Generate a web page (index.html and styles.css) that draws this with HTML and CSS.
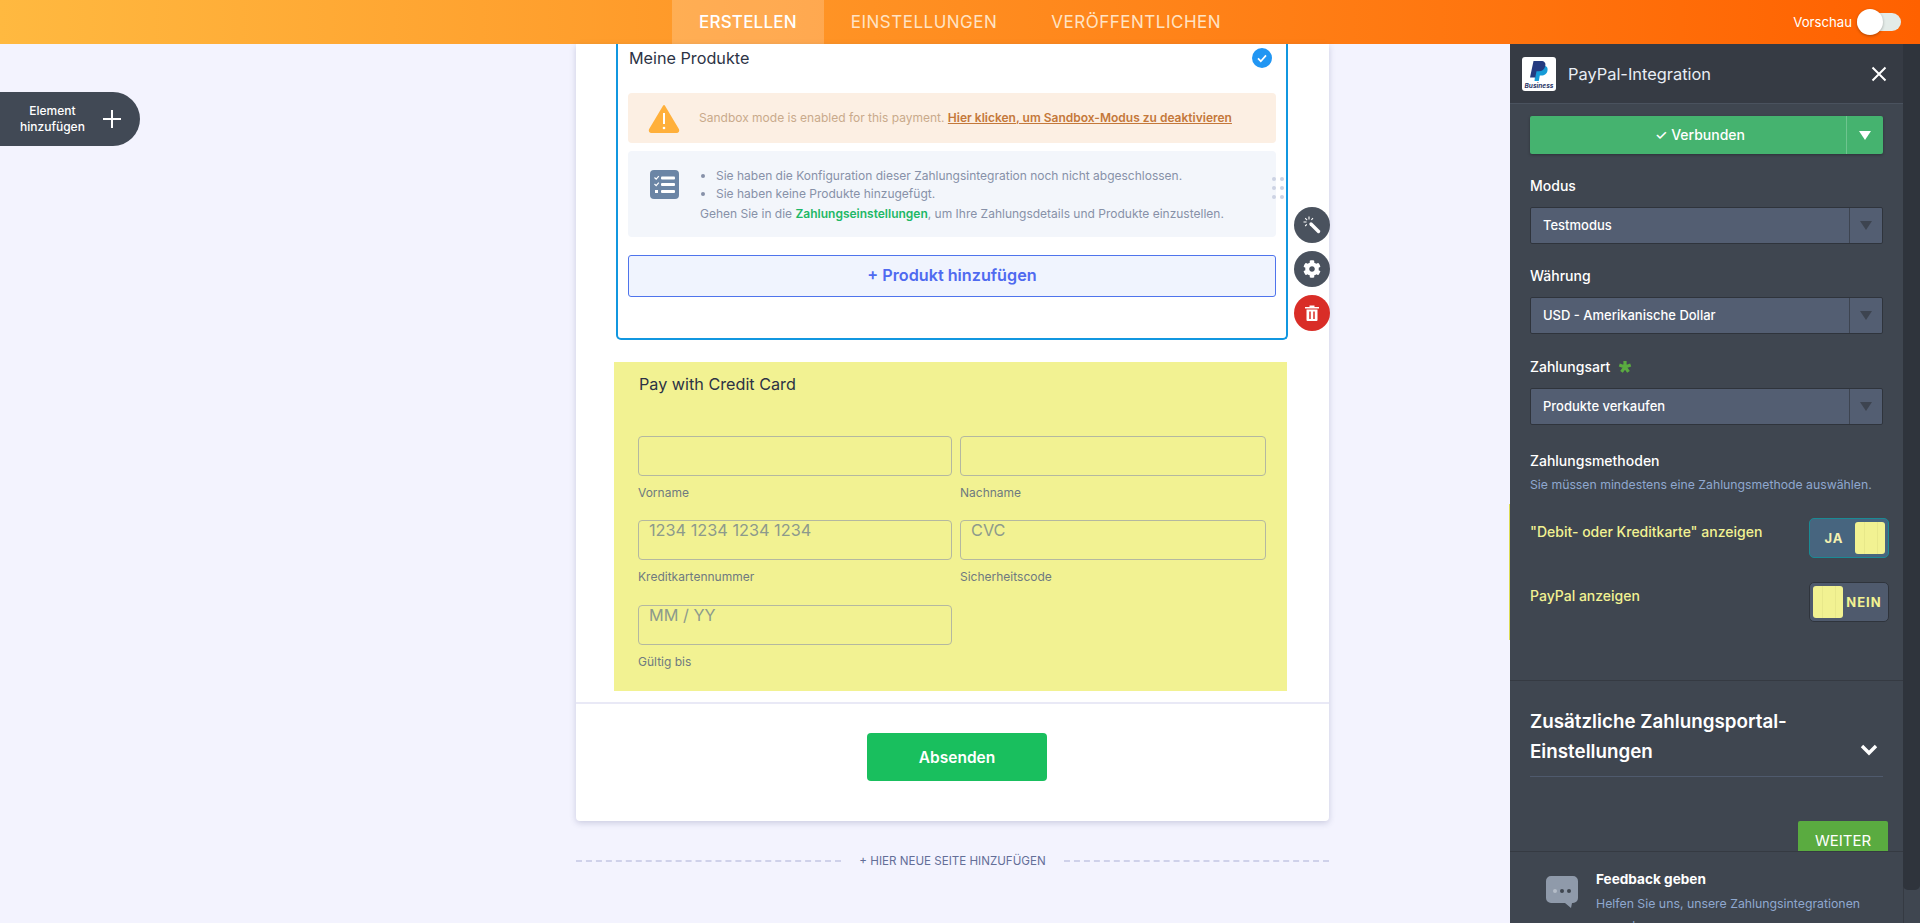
FILE: index.html
```html
<!doctype html>

<html lang="de">
<head>
  <meta charset="utf-8">
  <title>PayPal-Integration</title>
  <link rel="stylesheet" href="styles.css">
</head>

<body>
  <header class="topbar">
    <nav class="tabs">
      <a class="tab active">ERSTELLEN</a>
      <a class="tab">EINSTELLUNGEN</a>
      <a class="tab">VERÖFFENTLICHEN</a>
    </nav>
    <div class="preview">
      <span>Vorschau</span>
      <div class="preview-switch"><div class="preview-knob"></div></div>
    </div>
  </header>

  <div class="workspace">
    <main class="canvas">
      <button class="add-element">
        <span>Element<br>hinzufügen</span>
        <svg width="20" height="20" viewBox="0 0 20 20"><path d="M10 1v18M1 10h18" stroke="#fff" stroke-width="2" fill="none"/></svg>
      </button>

      <div class="form-card">
        <section class="product-box">
          <div class="product-head">
            <span>Meine Produkte</span>
            <svg width="20" height="20" viewBox="0 0 20 20"><circle cx="10" cy="10" r="10" fill="#2196f3"/><path d="M6 10.4l2.8 2.8L14 7.4" stroke="#fff" stroke-width="1.7" fill="none"/></svg>
          </div>

          <div class="notice notice-warn">
            <svg class="notice-icon" width="32" height="29" viewBox="0 0 32 29"><path d="M16 2L2 25.5c-.6 1.2 0 2.5 1.5 2.5h25c1.500 0 2.100-1.300 1.500-2.500z" fill="#ffb03b" stroke="#ffb03b" stroke-width="2" stroke-linejoin="round"/><path d="M16 9v11" stroke="#fff" stroke-width="2"/><circle cx="16" cy="24" r="1.300" fill="#fff"/></svg>
            <p>Sandbox mode is enabled for this payment. <a>Hier klicken, um Sandbox-Modus zu deaktivieren</a></p>
          </div>

          <div class="notice notice-info">
            <svg class="notice-icon list-icon" width="29" height="29" viewBox="0 0 29 29"><rect width="29" height="29" rx="4" fill="#6b85a5"/><path d="M4.500 7.500l1.700 1.700 2.600-3M4.500 14l1.700 1.700 2.600-3" stroke="#fff" stroke-width="1.200" fill="none"/><rect x="5" y="20" width="3" height="3" fill="#fff"/><rect x="11" y="6.500" width="14" height="3" rx="1" fill="#fff"/><rect x="11" y="13" width="14" height="3" rx="1" fill="#fff"/><rect x="11" y="20" width="14" height="3" rx="1" fill="#fff"/></svg>
            <div class="notice-text">
              <ul>
                <li>Sie haben die Konfiguration dieser Zahlungsintegration noch nicht abgeschlossen.</li>
                <li>Sie haben keine Produkte hinzugefügt.</li>
              </ul>
              <p>Gehen Sie in die <a>Zahlungseinstellungen</a>, um Ihre Zahlungsdetails und Produkte einzustellen.</p>
            </div>
          </div>

          <button class="add-product">+ Produkt hinzufügen</button>

          <div class="drag-dots"><i></i><i></i><i></i><i></i><i></i><i></i></div>

          <div class="tools">
            <button class="tool">
              <svg width="20" height="20" viewBox="0 0 20 20"><path d="M9 9l7.500 7.500" stroke="#fff" stroke-width="3.400" stroke-linecap="round"/><path d="M7 1.500v3M1.500 7h3M3.200 3.200l1.900 1.900M11 3.200L9.400 4.800M3.200 11l1.600-1.600" stroke="#fff" stroke-width="1.100" fill="none"/></svg>
            </button>
            <button class="tool">
              <svg width="18" height="18" viewBox="0 0 512 512"><path fill="#fff" d="M487.400 315.700l-42.600-24.600c4.300-23.200 4.300-47 0-70.200l42.600-24.600c4.900-2.800 7.100-8.600 5.500-14-11.100-35.600-30-67.800-54.700-94.600-3.800-4.100-10-5.100-14.800-2.300L380.800 110c-17.900-15.400-38.500-27.300-60.800-35.100V25.800c0-5.600-3.900-10.500-9.400-11.700-36.700-8.200-74.300-7.800-109.200 0-5.500 1.200-9.400 6.100-9.400 11.700V75c-22.200 7.900-42.800 19.800-60.800 35.100L88.700 85.500c-4.900-2.800-11-1.900-14.800 2.300-24.700 26.700-43.600 58.900-54.700 94.600-1.700 5.400.6 11.200 5.500 14L67.300 221c-4.300 23.200-4.300 47 0 70.200l-42.600 24.600c-4.900 2.800-7.100 8.600-5.500 14 11.100 35.600 30 67.800 54.700 94.600 3.800 4.100 10 5.100 14.800 2.300l42.600-24.600c17.900 15.400 38.500 27.300 60.800 35.100v49.200c0 5.600 3.900 10.500 9.400 11.700 36.700 8.200 74.300 7.800 109.200 0 5.500-1.200 9.400-6.100 9.400-11.700v-49.200c22.200-7.900 42.800-19.800 60.800-35.100l42.600 24.600c4.900 2.800 11 1.900 14.800-2.300 24.700-26.700 43.600-58.900 54.700-94.600 1.500-5.500-.7-11.300-5.600-14.100zM256 336c-44.100 0-80-35.900-80-80s35.900-80 80-80 80 35.900 80 80-35.900 80-80 80z"/></svg>
            </button>
            <button class="tool tool-delete">
              <svg width="14" height="16" viewBox="0 0 14 16"><path fill="#fff" d="M0 2h4.500V.6h5V2H14v1.500H0zM1.500 4.500h11V15a1 1 0 0 1-1 1h-9a1 1 0 0 1-1-1z"/><path d="M5 6.500V14M9 6.500V14" stroke="#d92d27" stroke-width="1.500"/></svg>
            </button>
          </div>
        </section>

        <section class="credit-card">
          <h3>Pay with Credit Card</h3>
          <div class="card-fields">
            <div class="field-cell"><div class="fake-input"></div><label>Vorname</label></div>
            <div class="field-cell"><div class="fake-input"></div><label>Nachname</label></div>
            <div class="field-cell"><div class="fake-input">1234 1234 1234 1234</div><label>Kreditkartennummer</label></div>
            <div class="field-cell"><div class="fake-input">CVC</div><label>Sicherheitscode</label></div>
            <div class="field-cell"><div class="fake-input">MM / YY</div><label>Gültig bis</label></div>
          </div>
        </section>

        <div class="submit-row">
          <button class="submit">Absenden</button>
        </div>
      </div>

      <div class="new-page">
        <span class="dash"></span>
        <span>+ HIER NEUE SEITE HINZUFÜGEN</span>
        <span class="dash"></span>
      </div>
    </main>

    <aside class="sidebar">
      <div class="panel">
        <div class="panel-head">
          <div class="logo">
            <svg width="20" height="21" viewBox="0 0 20 21"><path fill="#179bd7" d="M7 5h8c3 0 4 2 3.500 4.500C18 13 15.500 14.500 12.500 14.500h-1.700L9.800 20H5.500z"/><path fill="#253b80" d="M4.500 0h7.500c3.500 0 5 2 4.300 5-.7 3.500-3.300 5.200-6.500 5.200H7.500L6.300 16.500H1z"/></svg>
            <span>Business</span>
          </div>
          <span class="panel-title">PayPal-Integration</span>
          <svg class="panel-close" width="16" height="16" viewBox="0 0 16 16"><path d="M1.500 1.500l13 13M14.500 1.500l-13 13" stroke="#fff" stroke-width="2" fill="none"/></svg>
        </div>

        <div class="panel-body">
          <div class="panel-section">
            <div class="connected">
              <span class="connected-label">✓ Verbunden</span>
              <span class="connected-arrow"><i class="arrow arrow-white"></i></span>
            </div>

            <div class="field">
              <label>Modus</label>
              <div class="select"><span>Testmodus</span><b><i class="arrow"></i></b></div>
            </div>
            <div class="field">
              <label>Währung</label>
              <div class="select"><span>USD - Amerikanische Dollar</span><b><i class="arrow"></i></b></div>
            </div>
            <div class="field field-last">
              <label>Zahlungsart <svg class="required" width="14" height="14" viewBox="0 0 14 14"><path d="M7 7V1M7 7l5.700-1.900M7 7l3.500 4.900M7 7l-3.500 4.900M7 7L1.300 5.100" stroke="#5aab40" stroke-width="3.200" fill="none"/></svg></label>
              <div class="select"><span>Produkte verkaufen</span><b><i class="arrow"></i></b></div>
            </div>

            <h4 class="methods-title">Zahlungsmethoden</h4>
            <p class="methods-note">Sie müssen mindestens eine Zahlungsmethode auswählen.</p>

            <div class="method">
              <span>"Debit- oder Kreditkarte" anzeigen</span>
              <div class="toggle toggle-on"><span>JA</span><i class="grip"></i></div>
            </div>
            <div class="method">
              <span>PayPal anzeigen</span>
              <div class="toggle"><i class="grip"></i><span>NEIN</span></div>
            </div>
          </div>

          <div class="panel-section more">
            <div class="more-head">
              <h3>Zusätzliche Zahlungsportal-Einstellungen</h3>
              <svg width="18" height="13" viewBox="0 0 18 13"><path d="M2 3l7 7 7-7" stroke="#fff" stroke-width="3.400" fill="none"/></svg>
            </div>
            <div class="next-row"><button class="next">WEITER</button></div>
          </div>
        </div>

        <div class="feedback">
          <svg width="32" height="32" viewBox="0 0 32 32"><path fill="#8f9aaa" d="M5 0h22a5 5 0 0 1 5 5v17a5 5 0 0 1-5 5h-1l-1 5-6-5H5a5 5 0 0 1-5-5V5a5 5 0 0 1 5-5z"/><circle cx="9" cy="15" r="2" fill="#b4bcc8"/><circle cx="16" cy="15" r="2" fill="#3f4650"/><circle cx="23" cy="15" r="2" fill="#3f4650"/></svg>
          <div>
            <strong>Feedback geben</strong>
            <p>Helfen Sie uns, unsere Zahlungsintegrationen zu verbessern.</p>
          </div>
        </div>

        <div class="panel-edge"></div>
      </div>
      <div class="scroll-rail"><div class="scroll-thumb"></div></div>
    </aside>
  </div>
</body>
</html>
```

FILE: styles.css
```css
* {
  box-sizing: border-box;
}

html, body {
  height: 100%;
}

body {
  margin: 0;
  height: 923px;
  overflow: hidden;
  background: #f3f3fe;
  font-family: 'Inter', sans-serif;
  display: flex;
  flex-direction: column;
}

button {
  font-family: inherit;
  border: 0;
  padding: 0;
}

/* top bar */
.topbar {
  height: 44px;
  flex: none;
  display: flex;
  align-items: center;
  padding-left: 672px;
  background: linear-gradient(90deg, #ffb940, #ff6100);
}

.tabs {
  display: flex;
  height: 100%;
}

.tab {
  display: flex;
  align-items: center;
  padding: 0 27px;
  font-size: 17px;
  font-weight: 400;
  letter-spacing: 0.5px;
  color: #ffe3c4;
}

.tab.active {
  background: rgba(255, 255, 255, 0.2);
  color: #fff;
  font-weight: 500;
  letter-spacing: 0.2px;
}

.preview {
  margin-left: auto;
  display: flex;
  align-items: center;
  gap: 5px;
  padding-right: 19px;
  font-size: 13.200px;
  color: #fff;
}

.preview-switch {
  width: 44px;
  height: 18px;
  border-radius: 9px;
  background: #e3ebe8;
  position: relative;
}

.preview-knob {
  position: absolute;
  left: 0;
  top: -4px;
  width: 26px;
  height: 26px;
  border-radius: 50%;
  background: #fff;
  box-shadow: 0 1px 3px rgba(0, 0, 0, 0.3);
}

/* canvas */
.workspace {
  flex: 1;
  display: flex;
  min-height: 0;
}

.canvas {
  width: 1510px;
  flex: none;
  padding-left: 576px;
  position: relative;
}

.add-element {
  position: absolute;
  left: 0;
  top: 48px;
  width: 140px;
  height: 54px;
  display: flex;
  align-items: center;
  gap: 17px;
  padding-left: 20px;
  border-radius: 0 27px 27px 0;
  background: #414955;
  color: #fff;
  font-size: 12px;
  font-weight: 500;
  line-height: 16px;
  text-align: center;
}

.form-card {
  width: 753px;
  height: 777px;
  padding: 0 41px 0 38px;
  background: #fff;
  border-radius: 0 0 4px 4px;
  box-shadow: 0 2px 6px rgba(60, 65, 120, 0.22);
}

.product-box {
  position: relative;
  height: 296px;
  margin-left: 2px;
  padding: 0 10px;
  border: 2px solid #1197e0;
  border-top: 0;
  border-radius: 0 0 5px 5px;
}

.product-head {
  height: 49px;
  display: flex;
  align-items: center;
  justify-content: space-between;
  padding: 0 4px 22px 1px;
  font-size: 16.200px;
  color: #2c3345;
}

.notice {
  display: flex;
  border-radius: 4px;
  font-size: 12px;
  line-height: 18px;
}

.notice p {
  margin: 0;
}

.notice-icon {
  flex: none;
}

.notice-warn {
  height: 50px;
  align-items: center;
  padding-left: 20px;
  gap: 19px;
  background: #fcefe3;
  color: #c9aa8b;
}

.notice-warn a {
  color: #c4783a;
  font-weight: 600;
  text-decoration: underline;
}

.notice-info {
  height: 86px;
  margin-top: 8px;
  padding: 16px 0 0 22px;
  gap: 21px;
  background: #f3f6fb;
  color: #8791a8;
}

.list-icon {
  margin-top: 3px;
}

.notice-text ul {
  margin: 0 0 2px;
  padding-left: 16px;
}

.notice-text a {
  color: #1eb866;
  font-weight: 600;
}

.add-product {
  display: block;
  width: 100%;
  height: 42px;
  margin-top: 18px;
  padding-bottom: 2px;
  border: 1px solid #4f74ec;
  border-radius: 3px;
  background: #f0f4fe;
  color: #4f6af0;
  font-size: 16.200px;
  font-weight: 600;
}

.drag-dots {
  position: absolute;
  left: 654px;
  top: 133px;
  display: grid;
  grid-template-columns: 4px 4px;
  gap: 5px 4px;
}

.drag-dots i {
  width: 4px;
  height: 4px;
  border-radius: 50%;
  background: #cdd3e3;
}

.tools {
  position: absolute;
  left: 676px;
  top: 163px;
  display: flex;
  flex-direction: column;
  gap: 8px;
}

.tool {
  width: 36px;
  height: 36px;
  border-radius: 50%;
  background: #4a525e;
  display: flex;
  align-items: center;
  justify-content: center;
}

.tool-delete {
  background: #d92d27;
}

.credit-card {
  height: 329px;
  width: 673px;
  margin-top: 22px;
  padding: 10px 0 0 24px;
  background: #f2f292;
}

.credit-card h3 {
  margin: 0 0 0 1px;
  height: 24px;
  font-size: 16.200px;
  line-height: 24px;
  font-weight: 400;
  color: #2c3345;
}

.card-fields {
  display: grid;
  grid-template-columns: 314px 306px;
  column-gap: 8px;
  row-gap: 0;
  margin-top: 40px;
}

.field-cell {
  height: 84.400px;
}

.fake-input {
  height: 40px;
  border: 1px solid #b4b8a0;
  border-radius: 4px;
  padding: 0 10px;
  font-size: 16.300px;
  line-height: 18px;
  color: #8d9a8c;
}

.field-cell label {
  display: block;
  margin-top: 9px;
  font-size: 12px;
  line-height: 16px;
  color: #6f7a80;
}

.submit-row {
  margin: 11px -41px 0 -38px;
  border-top: 2px solid #e9e9f6;
  display: flex;
  justify-content: center;
  padding-top: 29px;
  padding-left: 9px;
}

.submit {
  width: 180px;
  height: 48px;
  border-radius: 4px;
  background: #19bf5e;
  color: #fff;
  font-size: 15.500px;
  font-weight: 600;
}

.new-page {
  width: 753px;
  margin-top: 33px;
  display: flex;
  align-items: center;
  gap: 18px;
  font-size: 11.600px;
  color: #636e98;
}

.dash {
  flex: 1;
  height: 0;
  border-top: 2px dashed #cfd1ea;
}

/* sidebar */
.sidebar {
  width: 410px;
  flex: none;
  display: flex;
  color: #fff;
}

.panel {
  position: relative;
  width: 393px;
  display: flex;
  flex-direction: column;
  background: #3f4650;
}

.panel-head {
  height: 60px;
  flex: none;
  display: flex;
  align-items: center;
  padding: 0 16px 0 12px;
  background: #363b44;
  border-bottom: 1px solid #4a525e;
}

.logo {
  width: 34px;
  height: 34px;
  border-radius: 3px;
  background: #fff;
  display: flex;
  flex-direction: column;
  align-items: center;
  padding-top: 4px;
}

.logo span {
  font-size: 6.500px;
  line-height: 8px;
  font-weight: 700;
  font-style: italic;
  color: #2b3668;
}

.panel-title {
  margin-left: 12px;
  font-size: 16.400px;
  color: #e8edf5;
}

.panel-close {
  margin-left: auto;
}

.panel-body {
  flex: 1;
  min-height: 0;
  overflow: hidden;
}

.panel-section {
  padding: 12px 20px 0;
}

.connected {
  height: 38px;
  display: flex;
  border-radius: 2px;
  background: #45b36f;
  box-shadow: 0 1px 3px rgba(0, 0, 0, 0.3);
  font-size: 14px;
  font-weight: 500;
}

.connected-label {
  width: 316px;
  padding: 0 0 2px 24px;
  display: flex;
  align-items: center;
  justify-content: center;
}

.connected-arrow {
  flex: 1;
  display: flex;
  align-items: center;
  justify-content: center;
  border-left: 1px solid #6ec48f;
}

.arrow {
  width: 0;
  height: 0;
  border-left: 6px solid transparent;
  border-right: 6px solid transparent;
  border-top: 9px solid #3d4450;
}

.arrow-white {
  border-top-color: #fff;
}

.field {
  margin-top: 22px;
}

.field-last {
  margin-top: 23px;
}

.field label {
  display: block;
  height: 20px;
  margin-bottom: 11px;
  font-size: 14px;
  font-weight: 500;
  line-height: 20px;
}

.required {
  vertical-align: -2px;
  margin-left: 4px;
}

.select {
  height: 37px;
  display: flex;
  border: 1px solid #2f343c;
  border-radius: 2px;
  background: #535e72;
  font-size: 13px;
  font-weight: 500;
}

.select span {
  flex: 1;
  padding-left: 12px;
  line-height: 35px;
}

.select b {
  width: 33px;
  display: flex;
  align-items: center;
  justify-content: center;
  border-left: 1px solid #3d4450;
}

.methods-title {
  margin: 26px 0 0;
  font-size: 14px;
  line-height: 20px;
  font-weight: 500;
}

.methods-note {
  margin: 5px 0 0;
  font-size: 12.250px;
  line-height: 18px;
  color: #8fa8cf;
}

.method {
  display: flex;
  justify-content: space-between;
  margin: 24px -6px 0 0;
  color: #f2f292;
  font-size: 14px;
  font-weight: 500;
  line-height: 27px;
}

.method:first-of-type {
  margin-top: 26px;
}

.toggle {
  width: 80px;
  height: 40px;
  display: flex;
  align-items: center;
  justify-content: space-between;
  padding: 0 3px;
  border: 1px solid #2f343c;
  border-radius: 5px;
  background: #4f5a6d;
  font-size: 13px;
  font-weight: 700;
  letter-spacing: 1px;
  line-height: 16px;
}

.toggle span {
  flex: 1;
  text-align: center;
}

.toggle-on {
  border-color: #1a8a94;
  background: #47657f;
  color: #f5f2b0;
}

.grip {
  width: 30px;
  height: 32px;
  border-radius: 3px;
  background: #f2f292 repeating-linear-gradient(90deg, transparent 0 9px, #e8e88a 9px 10px, transparent 10px 13px);
}

.more {
  margin-top: 58px;
  padding-top: 26px;
  border-top: 1px solid #353a42;
}

.more-head {
  display: flex;
  justify-content: space-between;
  align-items: flex-end;
  padding: 0 5px 9px 0;
  border-bottom: 1px solid #4f5a6d;
}

.more-head h3 {
  margin: 0;
  width: 300px;
  font-size: 18.800px;
  line-height: 30px;
  font-weight: 600;
}

.more-head svg {
  margin-bottom: 11px;
}

.next-row {
  display: flex;
  justify-content: flex-end;
  margin: 44px -5px 0 0;
}

.next {
  width: 90px;
  height: 38px;
  border-radius: 2px;
  background: #5aab40;
  color: #fff;
  font-size: 15px;
}

.feedback {
  height: 72px;
  flex: none;
  display: flex;
  gap: 18px;
  padding: 17px 20px 0 36px;
  border-top: 1px solid #353a42;
  overflow: hidden;
  color: #8fa8cf;
  font-size: 12.300px;
}

.feedback svg {
  flex: none;
  margin-top: 7px;
}

.feedback strong {
  display: block;
  color: #fff;
  font-size: 13.600px;
  line-height: 20px;
}

.feedback p {
  margin: 4px 0 0;
  max-width: 272px;
  line-height: 22px;
}

.panel-edge {
  position: absolute;
  left: -1px;
  top: 460px;
  width: 1px;
  height: 136px;
  background: #dcdc55;
}

.scroll-rail {
  flex: 1;
  background: #3f4650;
  border-left: 1px solid #353a42;
}

.scroll-thumb {
  height: 846px;
  margin-left: -1px;
  border-radius: 0 0 5px 5px;
  background: #2f343c;
}
```
